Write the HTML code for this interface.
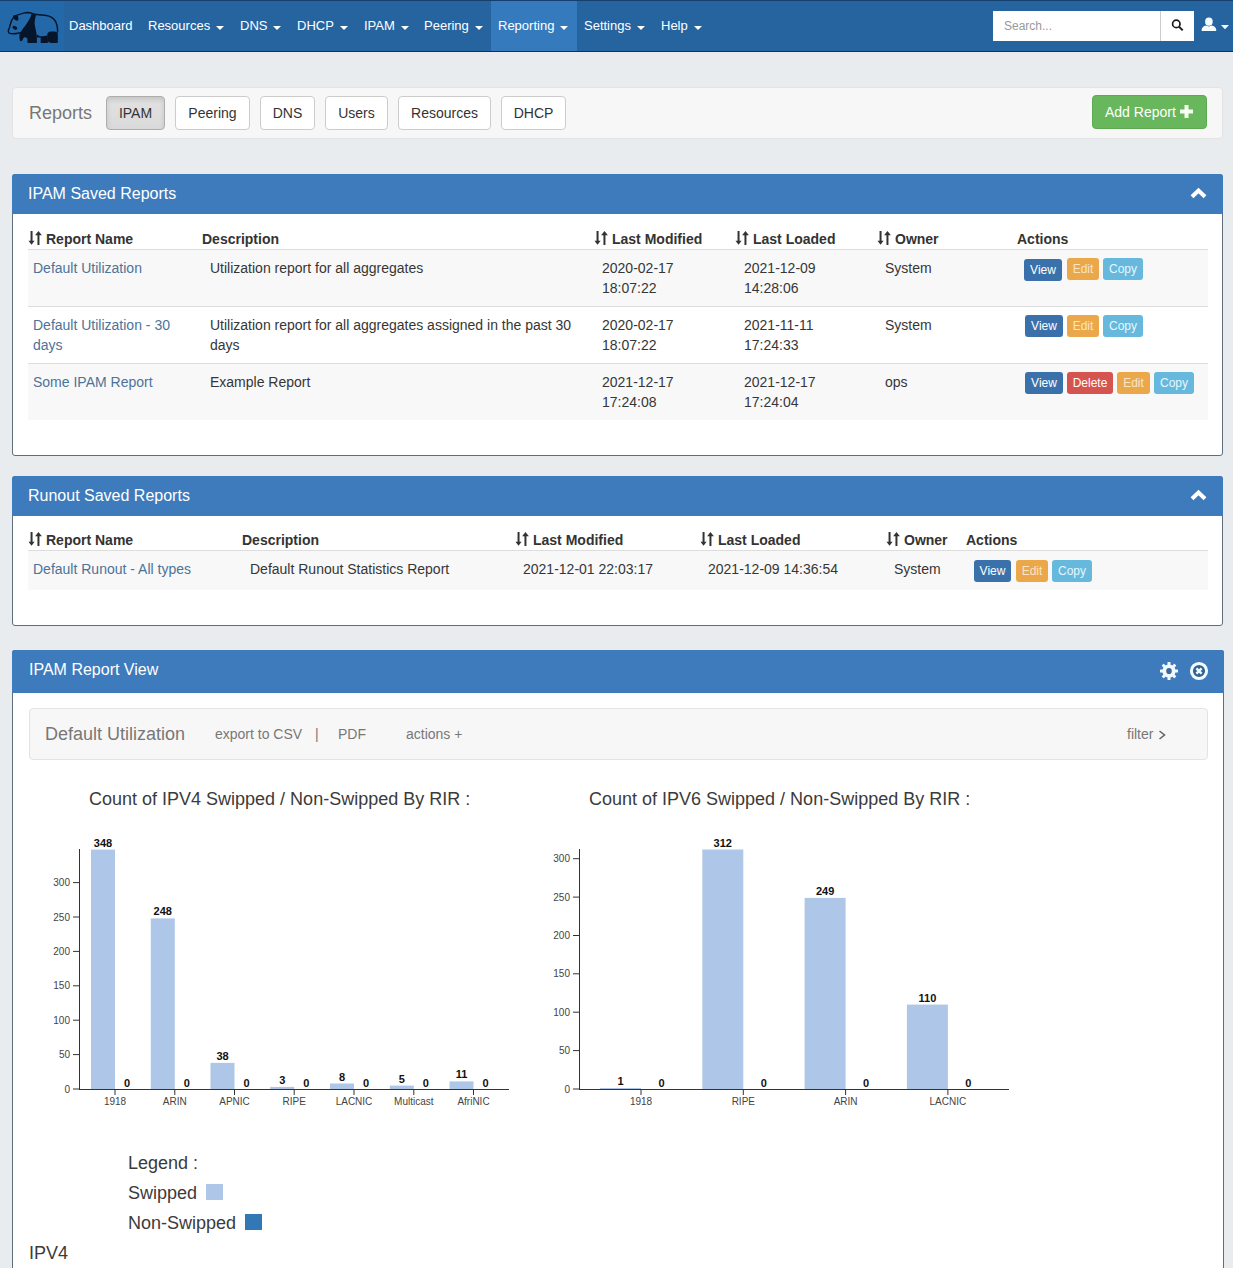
<!DOCTYPE html>
<html><head><meta charset="utf-8">
<style>
*{box-sizing:border-box;margin:0;padding:0}
html,body{width:1233px;height:1272px;overflow:hidden}
body{background:#fff;font-family:"Liberation Sans",sans-serif;color:#333;position:relative}
.abs{position:absolute}
#bg{position:absolute;left:0;top:0;width:1233px;height:1268px;background:#e8ecef}
#nav{position:absolute;left:0;top:0;width:1233px;height:52px;background:#2664a0;border-top:1px solid #173f6e;border-bottom:1px solid #0f3060}
#logo{position:absolute;left:0;top:0;width:64px;height:50px;background:#2369aa}
.ni{position:absolute;top:18px;font-size:13px;color:#fff;white-space:nowrap;line-height:16px}
.caret{display:inline-block;width:0;height:0;border-left:4px solid transparent;border-right:4px solid transparent;border-top:4px solid #fff;vertical-align:middle;margin-left:6px;position:relative;top:1px}
#active{position:absolute;left:491px;top:0;width:86px;height:50px;background:#357abd}
#search{position:absolute;left:993px;top:11px;width:167px;height:30px;background:#fff}
#search span{position:absolute;left:11px;top:8px;font-size:12px;color:#999}
#sbtn{position:absolute;left:1160px;top:11px;width:34px;height:30px;background:#fff;border-left:1px solid #ccc}
.well{position:absolute;background:#f7f7f7;border:1px solid #e3e3e3;border-radius:4px}
.btn{position:absolute;height:34px;border:1px solid #ccc;border-radius:4px;background:#fff;font-size:14px;color:#333;text-align:center;line-height:32px}
.panel{position:absolute;background:#fff;border:1px solid #5e6e7a;border-radius:3px}
.ph{position:absolute;left:-1px;top:-1px;right:-1px;background:#3d7bbd;border-radius:3px 3px 0 0}
.pt{position:absolute;left:16px;font-size:16px;color:#fff;white-space:nowrap}
.th{position:absolute;font-size:14px;font-weight:bold;color:#333;white-space:nowrap}
.td{position:absolute;font-size:14px;color:#363636;white-space:nowrap;line-height:20px}
.lk{color:#4d7399}
.row{position:absolute;background:#f8f8f8;border-top:1px solid #ddd}
.sb{position:absolute;height:22px;border-radius:3px;font-size:12px;color:#fff;text-align:center;line-height:22px}
.bv{background:#3a71ab}
.be{background:#eaa84b;color:#fbe5c4}
.bc{background:#66b9dc;color:#e6f6fc}
.bd{background:#d55450}
.ax{font-size:10px;fill:#444;font-family:"Liberation Sans",sans-serif}
.vl{font-size:11px;font-weight:bold;fill:#111;font-family:"Liberation Sans",sans-serif}
.gl{font-size:14px;color:#777;white-space:nowrap}
.ct{font-size:18px;color:#3b3b3b;white-space:nowrap}
</style></head>
<body>
<div id="bg"></div>
<!-- NAVBAR -->
<div id="nav">
  <div id="logo"></div>
  <div id="active"></div>
</div>
<div class="ni" style="left:69px">Dashboard</div>
<div class="ni" style="left:148px">Resources<span class="caret"></span></div>
<div class="ni" style="left:240px">DNS<span class="caret"></span></div>
<div class="ni" style="left:297px">DHCP<span class="caret"></span></div>
<div class="ni" style="left:364px">IPAM<span class="caret"></span></div>
<div class="ni" style="left:424px">Peering<span class="caret"></span></div>
<div class="ni" style="left:498px">Reporting<span class="caret"></span></div>
<div class="ni" style="left:584px">Settings<span class="caret"></span></div>
<div class="ni" style="left:661px">Help<span class="caret"></span></div>
<div id="search"><span>Search...</span></div>
<div id="sbtn"></div>

<!-- REPORTS WELL -->
<div class="well" style="left:12px;top:87px;width:1211px;height:52px"></div>
<div class="abs" style="left:29px;top:103px;font-size:18px;color:#777">Reports</div>
<div class="btn" style="left:106px;top:96px;width:59px;background:linear-gradient(#e2e2e2,#dadada);border-color:#adadad;box-shadow:inset 0 3px 5px rgba(0,0,0,.125)">IPAM</div>
<div class="btn" style="left:175px;top:96px;width:75px">Peering</div>
<div class="btn" style="left:260px;top:96px;width:55px">DNS</div>
<div class="btn" style="left:325px;top:96px;width:63px">Users</div>
<div class="btn" style="left:398px;top:96px;width:93px">Resources</div>
<div class="btn" style="left:501px;top:96px;width:65px">DHCP</div>
<div class="btn" style="left:1092px;top:95px;width:115px;background:#68b75c;border-color:#5eaa52;color:#fff;text-align:left;padding-left:12px">Add Report</div>
<svg class="abs" style="left:1180px;top:105px" width="13" height="13" viewBox="0 0 13 13"><rect x="4.5" y="0" width="4" height="13" fill="#f4fff0"/><rect x="0" y="4.5" width="13" height="4" fill="#f4fff0"/></svg>

<!-- IPAM SAVED REPORTS -->
<div class="panel" style="left:12px;top:174px;width:1211px;height:282px">
  <div class="ph" style="height:40px"><div class="pt" style="top:11px">IPAM Saved Reports</div></div>
</div>

<!-- RUNOUT SAVED REPORTS -->
<div class="panel" style="left:12px;top:476px;width:1211px;height:150px">
  <div class="ph" style="height:40px"><div class="pt" style="top:11px">Runout Saved Reports</div></div>
</div>


<!-- IPAM table -->
<div class="th" style="left:46px;top:231px">Report Name</div>
<svg class="abs" style="left:28px;top:231px" width="14" height="14" viewBox="0 0 14 14"><rect x="2.55" y="0" width="2" height="11" fill="#333"/><polygon points="0.5,9.8 6.6,9.8 3.55,13.8" fill="#333"/><rect x="9.45" y="3" width="2" height="11" fill="#333"/><polygon points="7.1,4.2 13.9,4.2 10.45,0" fill="#333"/></svg>
<div class="th" style="left:202px;top:231px">Description</div>
<div class="th" style="left:612px;top:231px">Last Modified</div>
<svg class="abs" style="left:594px;top:231px" width="14" height="14" viewBox="0 0 14 14"><rect x="2.55" y="0" width="2" height="11" fill="#333"/><polygon points="0.5,9.8 6.6,9.8 3.55,13.8" fill="#333"/><rect x="9.45" y="3" width="2" height="11" fill="#333"/><polygon points="7.1,4.2 13.9,4.2 10.45,0" fill="#333"/></svg>
<div class="th" style="left:753px;top:231px">Last Loaded</div>
<svg class="abs" style="left:735px;top:231px" width="14" height="14" viewBox="0 0 14 14"><rect x="2.55" y="0" width="2" height="11" fill="#333"/><polygon points="0.5,9.8 6.6,9.8 3.55,13.8" fill="#333"/><rect x="9.45" y="3" width="2" height="11" fill="#333"/><polygon points="7.1,4.2 13.9,4.2 10.45,0" fill="#333"/></svg>
<div class="th" style="left:895px;top:231px">Owner</div>
<svg class="abs" style="left:877px;top:231px" width="14" height="14" viewBox="0 0 14 14"><rect x="2.55" y="0" width="2" height="11" fill="#333"/><polygon points="0.5,9.8 6.6,9.8 3.55,13.8" fill="#333"/><rect x="9.45" y="3" width="2" height="11" fill="#333"/><polygon points="7.1,4.2 13.9,4.2 10.45,0" fill="#333"/></svg>
<div class="th" style="left:1017px;top:231px">Actions</div>
<div class="row" style="left:28px;top:249px;width:1180px;height:58px"></div>
<div class="row" style="left:28px;top:306px;width:1180px;height:58px;background:#fff"></div>
<div class="row" style="left:28px;top:363px;width:1180px;height:57px"></div>
<div class="td lk" style="left:33px;top:258px">Default Utilization</div>
<div class="td" style="left:210px;top:258px">Utilization report for all aggregates</div>
<div class="td" style="left:602px;top:258px">2020-02-17<br>18:07:22</div>
<div class="td" style="left:744px;top:258px">2021-12-09<br>14:28:06</div>
<div class="td" style="left:885px;top:258px">System</div>
<div class="sb bv" style="left:1024px;top:259px;width:38px">View</div>
<div class="sb be" style="left:1067px;top:258px;width:32px">Edit</div>
<div class="sb bc" style="left:1103px;top:258px;width:40px">Copy</div>

<div class="td lk" style="left:33px;top:315px">Default Utilization - 30<br>days</div>
<div class="td" style="left:210px;top:315px">Utilization report for all aggregates assigned in the past 30<br>days</div>
<div class="td" style="left:602px;top:315px">2020-02-17<br>18:07:22</div>
<div class="td" style="left:744px;top:315px">2021-11-11<br>17:24:33</div>
<div class="td" style="left:885px;top:315px">System</div>
<div class="sb bv" style="left:1025px;top:315px;width:38px">View</div>
<div class="sb be" style="left:1067px;top:315px;width:32px">Edit</div>
<div class="sb bc" style="left:1103px;top:315px;width:40px">Copy</div>

<div class="td lk" style="left:33px;top:372px">Some IPAM Report</div>
<div class="td" style="left:210px;top:372px">Example Report</div>
<div class="td" style="left:602px;top:372px">2021-12-17<br>17:24:08</div>
<div class="td" style="left:744px;top:372px">2021-12-17<br>17:24:04</div>
<div class="td" style="left:885px;top:372px">ops</div>
<div class="sb bv" style="left:1025px;top:372px;width:38px">View</div>
<div class="sb bd" style="left:1067px;top:372px;width:46px">Delete</div>
<div class="sb be" style="left:1117px;top:372px;width:33px">Edit</div>
<div class="sb bc" style="left:1154px;top:372px;width:40px">Copy</div>

<!-- RUNOUT table -->
<div class="th" style="left:46px;top:532px">Report Name</div>
<svg class="abs" style="left:28px;top:532px" width="14" height="14" viewBox="0 0 14 14"><rect x="2.55" y="0" width="2" height="11" fill="#333"/><polygon points="0.5,9.8 6.6,9.8 3.55,13.8" fill="#333"/><rect x="9.45" y="3" width="2" height="11" fill="#333"/><polygon points="7.1,4.2 13.9,4.2 10.45,0" fill="#333"/></svg>
<div class="th" style="left:242px;top:532px">Description</div>
<div class="th" style="left:533px;top:532px">Last Modified</div>
<svg class="abs" style="left:515px;top:532px" width="14" height="14" viewBox="0 0 14 14"><rect x="2.55" y="0" width="2" height="11" fill="#333"/><polygon points="0.5,9.8 6.6,9.8 3.55,13.8" fill="#333"/><rect x="9.45" y="3" width="2" height="11" fill="#333"/><polygon points="7.1,4.2 13.9,4.2 10.45,0" fill="#333"/></svg>
<div class="th" style="left:718px;top:532px">Last Loaded</div>
<svg class="abs" style="left:700px;top:532px" width="14" height="14" viewBox="0 0 14 14"><rect x="2.55" y="0" width="2" height="11" fill="#333"/><polygon points="0.5,9.8 6.6,9.8 3.55,13.8" fill="#333"/><rect x="9.45" y="3" width="2" height="11" fill="#333"/><polygon points="7.1,4.2 13.9,4.2 10.45,0" fill="#333"/></svg>
<div class="th" style="left:904px;top:532px">Owner</div>
<svg class="abs" style="left:886px;top:532px" width="14" height="14" viewBox="0 0 14 14"><rect x="2.55" y="0" width="2" height="11" fill="#333"/><polygon points="0.5,9.8 6.6,9.8 3.55,13.8" fill="#333"/><rect x="9.45" y="3" width="2" height="11" fill="#333"/><polygon points="7.1,4.2 13.9,4.2 10.45,0" fill="#333"/></svg>
<div class="th" style="left:966px;top:532px">Actions</div>
<div class="row" style="left:28px;top:550px;width:1180px;height:40px"></div>
<div class="td lk" style="left:33px;top:559px">Default Runout - All types</div>
<div class="td" style="left:250px;top:559px">Default Runout Statistics Report</div>
<div class="td" style="left:523px;top:559px">2021-12-01 22:03:17</div>
<div class="td" style="left:708px;top:559px">2021-12-09 14:36:54</div>
<div class="td" style="left:894px;top:559px">System</div>
<div class="sb bv" style="left:974px;top:560px;width:37px">View</div>
<div class="sb be" style="left:1016px;top:560px;width:32px">Edit</div>
<div class="sb bc" style="left:1052px;top:560px;width:40px">Copy</div>

<!-- IPAM REPORT VIEW -->
<div class="panel" style="left:12px;top:650px;width:1212px;height:618px;border-bottom:none;border-radius:3px 3px 0 0">
  <div class="ph" style="height:43px"><div class="pt" style="top:11px;left:17px">IPAM Report View</div></div>
</div>
<div class="well" style="left:29px;top:708px;width:1179px;height:52px"></div>


<div class="abs" style="left:45px;top:724px;font-size:18px;color:#777;white-space:nowrap">Default Utilization</div>
<div class="abs gl" style="left:215px;top:726px">export to CSV</div>
<div class="abs gl" style="left:315px;top:726px">|</div>
<div class="abs gl" style="left:338px;top:726px">PDF</div>
<div class="abs gl" style="left:406px;top:726px">actions +</div>
<div class="abs gl" style="left:1127px;top:726px">filter</div>
<svg class="abs" style="left:1158px;top:730px" width="9" height="10" viewBox="0 0 9 10"><polyline points="1.5,1 6.5,5 1.5,9" fill="none" stroke="#666" stroke-width="1.6"/></svg>
<div class="abs ct" style="left:89px;top:789px">Count of IPV4 Swipped / Non-Swipped By RIR :</div>
<div class="abs ct" style="left:589px;top:789px">Count of IPV6 Swipped / Non-Swipped By RIR :</div>
<svg class="abs" style="left:0;top:0;overflow:visible" width="1233" height="1272">
<rect x="91.0" y="849.6" width="24" height="239.4" fill="#aec7e8"/>
<text class="vl" x="103.0" y="846.6" text-anchor="middle">348</text>
<text class="vl" x="127.0" y="1087" text-anchor="middle">0</text>
<line x1="115.0" y1="1089" x2="115.0" y2="1095" stroke="#333" stroke-width="1"/>
<text class="ax" x="115.0" y="1105" text-anchor="middle">1918</text>
<rect x="150.8" y="918.4" width="24" height="170.6" fill="#aec7e8"/>
<text class="vl" x="162.8" y="915.4" text-anchor="middle">248</text>
<text class="vl" x="186.8" y="1087" text-anchor="middle">0</text>
<line x1="174.8" y1="1089" x2="174.8" y2="1095" stroke="#333" stroke-width="1"/>
<text class="ax" x="174.8" y="1105" text-anchor="middle">ARIN</text>
<rect x="210.5" y="1062.9" width="24" height="26.1" fill="#aec7e8"/>
<text class="vl" x="222.5" y="1059.9" text-anchor="middle">38</text>
<text class="vl" x="246.5" y="1087" text-anchor="middle">0</text>
<line x1="234.5" y1="1089" x2="234.5" y2="1095" stroke="#333" stroke-width="1"/>
<text class="ax" x="234.5" y="1105" text-anchor="middle">APNIC</text>
<rect x="270.2" y="1086.9" width="24" height="2.1" fill="#aec7e8"/>
<text class="vl" x="282.2" y="1083.9" text-anchor="middle">3</text>
<text class="vl" x="306.2" y="1087" text-anchor="middle">0</text>
<line x1="294.2" y1="1089" x2="294.2" y2="1095" stroke="#333" stroke-width="1"/>
<text class="ax" x="294.2" y="1105" text-anchor="middle">RIPE</text>
<rect x="330.0" y="1083.5" width="24" height="5.5" fill="#aec7e8"/>
<text class="vl" x="342.0" y="1080.5" text-anchor="middle">8</text>
<text class="vl" x="366.0" y="1087" text-anchor="middle">0</text>
<line x1="354.0" y1="1089" x2="354.0" y2="1095" stroke="#333" stroke-width="1"/>
<text class="ax" x="354.0" y="1105" text-anchor="middle">LACNIC</text>
<rect x="389.8" y="1085.6" width="24" height="3.4" fill="#aec7e8"/>
<text class="vl" x="401.8" y="1082.6" text-anchor="middle">5</text>
<text class="vl" x="425.8" y="1087" text-anchor="middle">0</text>
<line x1="413.8" y1="1089" x2="413.8" y2="1095" stroke="#333" stroke-width="1"/>
<text class="ax" x="413.8" y="1105" text-anchor="middle">Multicast</text>
<rect x="449.5" y="1081.4" width="24" height="7.6" fill="#aec7e8"/>
<text class="vl" x="461.5" y="1078.4" text-anchor="middle">11</text>
<text class="vl" x="485.5" y="1087" text-anchor="middle">0</text>
<line x1="473.5" y1="1089" x2="473.5" y2="1095" stroke="#333" stroke-width="1"/>
<text class="ax" x="473.5" y="1105" text-anchor="middle">AfriNIC</text>
<line x1="79.5" y1="849" x2="79.5" y2="1089.5" stroke="#333" stroke-width="1"/>
<line x1="79" y1="1089.5" x2="509" y2="1089.5" stroke="#333" stroke-width="1"/>
<line x1="73" y1="1089.0" x2="79" y2="1089.0" stroke="#333" stroke-width="1"/>
<text class="ax" x="70" y="1092.5" text-anchor="end">0</text>
<line x1="73" y1="1054.6" x2="79" y2="1054.6" stroke="#333" stroke-width="1"/>
<text class="ax" x="70" y="1058.1" text-anchor="end">50</text>
<line x1="73" y1="1020.2" x2="79" y2="1020.2" stroke="#333" stroke-width="1"/>
<text class="ax" x="70" y="1023.7" text-anchor="end">100</text>
<line x1="73" y1="985.8" x2="79" y2="985.8" stroke="#333" stroke-width="1"/>
<text class="ax" x="70" y="989.3" text-anchor="end">150</text>
<line x1="73" y1="951.4" x2="79" y2="951.4" stroke="#333" stroke-width="1"/>
<text class="ax" x="70" y="954.9" text-anchor="end">200</text>
<line x1="73" y1="917.0" x2="79" y2="917.0" stroke="#333" stroke-width="1"/>
<text class="ax" x="70" y="920.5" text-anchor="end">250</text>
<line x1="73" y1="882.6" x2="79" y2="882.6" stroke="#333" stroke-width="1"/>
<text class="ax" x="70" y="886.1" text-anchor="end">300</text>
<rect x="600.0" y="1088.0" width="41" height="1.0" fill="#aec7e8"/>
<text class="vl" x="620.5" y="1085.0" text-anchor="middle">1</text>
<text class="vl" x="661.5" y="1087" text-anchor="middle">0</text>
<line x1="641.0" y1="1089" x2="641.0" y2="1095" stroke="#333" stroke-width="1"/>
<text class="ax" x="641.0" y="1105" text-anchor="middle">1918</text>
<rect x="702.3" y="849.5" width="41" height="239.5" fill="#aec7e8"/>
<text class="vl" x="722.8" y="846.5" text-anchor="middle">312</text>
<text class="vl" x="763.8" y="1087" text-anchor="middle">0</text>
<line x1="743.3" y1="1089" x2="743.3" y2="1095" stroke="#333" stroke-width="1"/>
<text class="ax" x="743.3" y="1105" text-anchor="middle">RIPE</text>
<rect x="804.6" y="897.9" width="41" height="191.1" fill="#aec7e8"/>
<text class="vl" x="825.1" y="894.9" text-anchor="middle">249</text>
<text class="vl" x="866.1" y="1087" text-anchor="middle">0</text>
<line x1="845.6" y1="1089" x2="845.6" y2="1095" stroke="#333" stroke-width="1"/>
<text class="ax" x="845.6" y="1105" text-anchor="middle">ARIN</text>
<rect x="906.9" y="1004.6" width="41" height="84.4" fill="#aec7e8"/>
<text class="vl" x="927.4" y="1001.6" text-anchor="middle">110</text>
<text class="vl" x="968.4" y="1087" text-anchor="middle">0</text>
<line x1="947.9" y1="1089" x2="947.9" y2="1095" stroke="#333" stroke-width="1"/>
<text class="ax" x="947.9" y="1105" text-anchor="middle">LACNIC</text>
<line x1="579.5" y1="849" x2="579.5" y2="1089.5" stroke="#333" stroke-width="1"/>
<line x1="579" y1="1089.5" x2="1009" y2="1089.5" stroke="#333" stroke-width="1"/>
<line x1="573" y1="1089.0" x2="579" y2="1089.0" stroke="#333" stroke-width="1"/>
<text class="ax" x="570" y="1092.5" text-anchor="end">0</text>
<line x1="573" y1="1050.6" x2="579" y2="1050.6" stroke="#333" stroke-width="1"/>
<text class="ax" x="570" y="1054.1" text-anchor="end">50</text>
<line x1="573" y1="1012.2" x2="579" y2="1012.2" stroke="#333" stroke-width="1"/>
<text class="ax" x="570" y="1015.7" text-anchor="end">100</text>
<line x1="573" y1="973.8" x2="579" y2="973.8" stroke="#333" stroke-width="1"/>
<text class="ax" x="570" y="977.3" text-anchor="end">150</text>
<line x1="573" y1="935.5" x2="579" y2="935.5" stroke="#333" stroke-width="1"/>
<text class="ax" x="570" y="939.0" text-anchor="end">200</text>
<line x1="573" y1="897.1" x2="579" y2="897.1" stroke="#333" stroke-width="1"/>
<text class="ax" x="570" y="900.6" text-anchor="end">250</text>
<line x1="573" y1="858.7" x2="579" y2="858.7" stroke="#333" stroke-width="1"/>
<text class="ax" x="570" y="862.2" text-anchor="end">300</text>
</svg>
<div class="abs ct" style="left:128px;top:1153px">Legend :</div>
<div class="abs ct" style="left:128px;top:1183px">Swipped</div>
<div class="abs" style="left:206px;top:1184px;width:17px;height:16px;background:#aec7e8"></div>
<div class="abs ct" style="left:128px;top:1213px">Non-Swipped</div>
<div class="abs" style="left:245px;top:1214px;width:17px;height:16px;background:#3278b4"></div>
<div class="abs ct" style="left:29px;top:1243px">IPV4</div>


<!-- panel header icons -->
<svg class="abs" style="left:1190px;top:187px" width="17" height="12" viewBox="0 0 17 12"><polyline points="2,9.8 8.5,3.5 15,9.8" fill="none" stroke="#fff" stroke-width="4"/></svg>
<svg class="abs" style="left:1190px;top:489px" width="17" height="12" viewBox="0 0 17 12"><polyline points="2,9.8 8.5,3.5 15,9.8" fill="none" stroke="#fff" stroke-width="4"/></svg>
<svg class="abs" style="left:1159px;top:661px" width="20" height="20" viewBox="-10 -10 20 20">
 <g fill="#f2f9ff">
  <circle r="6.6"/>
  <rect x="-1.5" y="-9" width="3" height="18" rx="0.6"/>
  <rect x="-1.5" y="-9" width="3" height="18" rx="0.6" transform="rotate(45)"/>
  <rect x="-1.5" y="-9" width="3" height="18" rx="0.6" transform="rotate(90)"/>
  <rect x="-1.5" y="-9" width="3" height="18" rx="0.6" transform="rotate(135)"/>
 </g>
 <ellipse rx="2.8" ry="3.1" fill="#3a6a9c"/>
</svg>
<svg class="abs" style="left:1189px;top:661px" width="20" height="20" viewBox="-10 -10 20 20">
 <circle r="6" fill="#33628f"/>
 <circle r="7.6" fill="none" stroke="#f2f9ff" stroke-width="3"/>
 <path d="M-2.6,-2.6 L2.6,2.6 M2.6,-2.6 L-2.6,2.6" stroke="#f2f9ff" stroke-width="2.5"/>
</svg>
<!-- search icon -->
<svg class="abs" style="left:1170px;top:18px" width="14" height="14" viewBox="0 0 14 14"><circle cx="6.3" cy="5.9" r="3.7" fill="none" stroke="#1a1a1a" stroke-width="1.7"/><line x1="8.9" y1="8.6" x2="12.7" y2="12.4" stroke="#1a1a1a" stroke-width="2"/></svg>
<!-- user icon -->
<svg class="abs" style="left:1201px;top:17px" width="16" height="15" viewBox="0 0 16 15"><ellipse cx="7.9" cy="4.7" rx="3.8" ry="4.1" fill="#f4fbff"/><path d="M0.7,14 L0.7,12.2 Q1.2,9.5 5,8.5 L7.9,9.4 L10.8,8.5 Q14.6,9.5 15.2,12.2 L15.2,14 Z" fill="#f4fbff"/></svg>
<svg class="abs" style="left:1221px;top:25px" width="8" height="5" viewBox="0 0 8 5"><polygon points="0,0 8,0 4,4.2" fill="#f4fbff"/></svg>
<!-- logo -->
<svg class="abs" style="left:0;top:0" width="64" height="50" viewBox="0 0 64 50">
 <g fill="#06152a" stroke="#06152a">
  <path d="M16.5,15.4 C20,14.2 24,12.6 27.5,12.5 C30,12.6 32,13.4 35,14.2 C39,15 43,15.2 46.3,15.5 C50,16 53,17.8 55,20.5 C57,23.5 57.7,27 57.6,32.5" fill="none" stroke-width="1.4"/>
  <path d="M14.2,16.5 C12.3,18.5 11,21.5 10.3,24.5 C9.8,27 9,29 8.3,30.6 C8.2,32.5 9.2,33.5 11,33.6 C13,33.8 15.5,33.7 18,33.2 C19.8,32.9 21.5,32.5 23,32" fill="none" stroke-width="1.4"/>
  <path d="M13.2,15.6 C14.5,14.6 16.8,14.8 17.8,16 C18.6,17.5 18.6,19.5 18,20.6 C16.5,20.8 15,20.2 14.2,19 C13.5,18 13,16.8 13.2,15.6 Z" stroke="none"/>
  <ellipse cx="14.9" cy="27.8" rx="2.6" ry="1.7" transform="rotate(30 14.9 27.8)" stroke="none"/>
  <path d="M31.6,14 L36.2,14.5 C35.5,17 34.6,20 34.6,23.5 C35,27.5 36.2,31 36.6,34.5 C36.9,37.5 37,40.5 36.9,42.9 L27.5,42.9 L27.4,38.4 C26.2,37.5 24.8,37.2 23.8,37.4 C23,39 22.2,40.5 21.6,41.2 L20.1,41 C19.4,39 19.2,36.5 19.6,34.3 C21,31 23,28.5 24.7,26.5 C26.8,23.5 28.8,20.5 30.3,17.4 C30.8,16.2 31.2,15 31.6,14 Z" stroke="none"/>
  <path d="M36.4,34.2 C37.8,35.3 39.3,36.1 40.8,36.2 C43,36.4 45.5,36 47.7,35.3 L47.9,41.5 L47.6,42.9 L40.7,42.9 L40.6,37.5 L36.9,37.5 Z" stroke="none"/>
  <path d="M47.4,33.5 C48,31.9 50,31.3 52.5,31.4 C55,31.5 57,31.8 57.6,32.8 C58,36 57.9,40 57.7,42.9 L50.2,42.9 C49.6,42.2 49.2,41.6 48.8,41.2 L48.2,42.9 L47.6,42.9 Z" stroke="none"/>
 </g>
</svg>

</body></html>
